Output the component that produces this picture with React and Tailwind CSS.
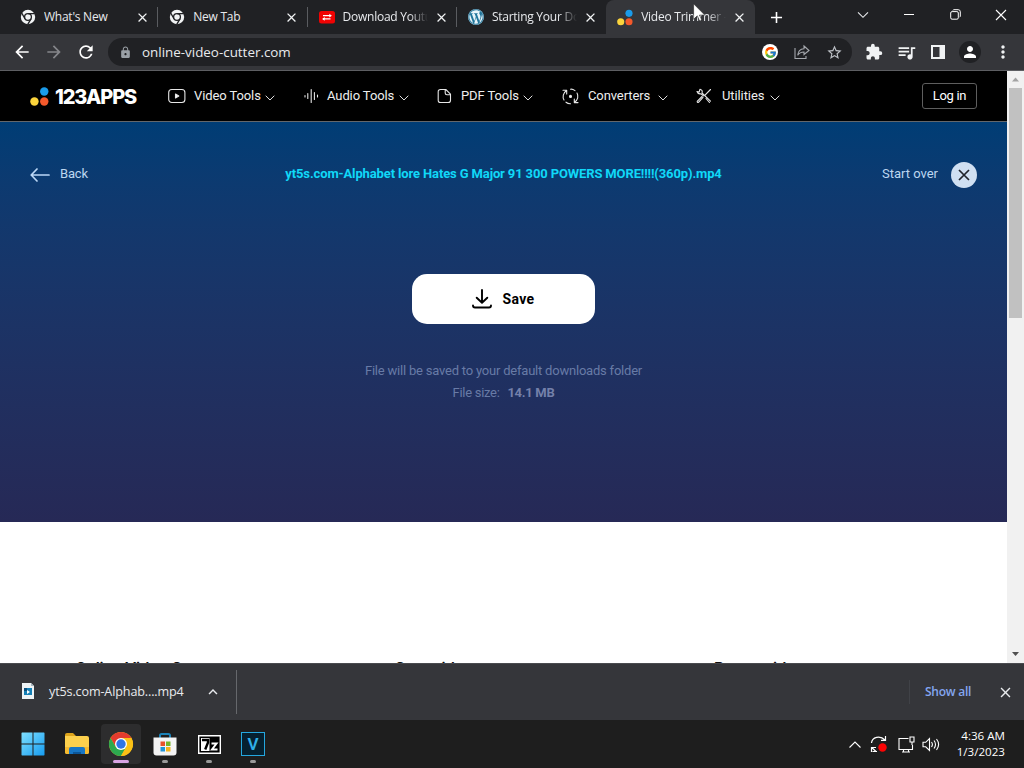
import React from 'react';
import {
  MdArrowBack,
  MdArrowForward,
  MdClose,
  MdAdd,
  MdExtension,
  MdLock,
  MdMoreVert,
  MdPerson,
  MdQueueMusic,
  MdRefresh,
  MdStarBorder,
  MdExpandLess,
} from 'react-icons/md';
import { FaWordpress } from 'react-icons/fa';
import { FcGoogle } from 'react-icons/fc';

const MonoChrome = () => (
  <svg width="16" height="16" viewBox="0 0 16 16">
    <circle cx="8" cy="8" r="7.2" fill="#f1f3f4" />
    <circle cx="8" cy="8" r="3.4" fill="none" stroke="#202124" strokeWidth="1.3" />
    <path d="M8 4.6h6.8M5 9.8 1.6 3.9M11 9.8 7.6 15.6" stroke="#202124" strokeWidth="1.3" />
  </svg>
);

const YoutubeDownload = () => (
  <svg width="16" height="16" viewBox="0 0 16 16">
    <rect x="0" y="2" width="16" height="12.5" rx="2.5" fill="#f00303" />
    <path d="M4 6.7h7M4 9.9h7.500" stroke="#fff" strokeWidth="1.2" />
    <path d="m10.300 4.800 2.600 1.900-2.600 1.900zM5.700 8l-2.600 1.900 2.600 1.900z" fill="#fff" />
  </svg>
);

const AppsDots = ({ size = 18 }) => (
  <svg width={size} height={size} viewBox="0 0 18 18">
    <circle cx="13.5" cy="4.3" r="4" fill="#1a9bea" />
    <circle cx="4.2" cy="13.8" r="4" fill="#fbd43c" />
    <circle cx="13.5" cy="13.8" r="4" fill="#f4592b" />
  </svg>
);

const tabs = [
  { title: "What's New", icon: <MonoChrome /> },
  { title: 'New Tab', icon: <MonoChrome /> },
  { title: 'Download Youtu', icon: <YoutubeDownload /> },
  { title: 'Starting Your Do', icon: <span className="rounded-full bg-[#21759b]"><FaWordpress size={16} color="#e8f4fa" /></span> },
  { title: 'Video Trimmer -', icon: <AppsDots size={17} />, active: true },
];

const Tab = ({ tab, index }) => (
  <div
    className={`flex items-center h-[34px] w-[149.3px] pl-[11px] shrink-0 ${
      tab.active ? 'bg-[#35363a] rounded-t-lg' : ''
    }`}
  >
    <span className="w-4 shrink-0 flex">{tab.icon}</span>
    <span
      className={`ml-2 w-[85px] shrink-0 overflow-hidden whitespace-nowrap text-[12px] tracking-[-0.25px] text-[#e8eaed] ${
        index > 1 ? '[mask-image:linear-gradient(to_right,#000_78%,transparent)]' : ''
      }`}
    >
      {tab.title}
    </span>
    <MdClose size={15} className="ml-[6px] shrink-0" color="#f1f3f4" />
    {index < 3 && <span className="ml-auto w-px h-5 bg-[#5a5c60]" />}
  </div>
);

const TabStrip = () => (
  <div className="flex h-[34px] pl-[9px] bg-[#202124]">
    {tabs.map((tab, i) => (
      <Tab key={tab.title} tab={tab} index={i} />
    ))}
    <div className="flex items-center pl-[12px]">
      <MdAdd size={19} color="#fff" />
    </div>
    <div className="ml-auto flex h-[29px]">
      <div className="w-[46px] flex items-center justify-center">
        <svg width="12" height="8" viewBox="0 0 12 8" fill="none" stroke="#e8eaed" strokeWidth="1.1"><path d="m1 1.3 5 5 5-5" /></svg>
      </div>
      <div className="w-[46px] flex items-center justify-center">
        <span className="w-[10px] h-px bg-[#fff]" />
      </div>
      <div className="w-[46px] flex items-center justify-center">
        <svg width="11" height="11" viewBox="0 0 11 11" fill="none" stroke="#fff"><rect x=".7" y="2.6" width="7.6" height="7.6" rx="1.4" /><path d="M2.8 1.4Q3.2.7 4 .7h4.2q2.1 0 2.1 2.1V7q0 .7-.7 1.2" /></svg>
      </div>
      <div className="w-[46px] flex items-center justify-center">
        <svg width="12" height="12" viewBox="0 0 12 12" stroke="#fff" strokeWidth="1.1"><path d="m1 1 10 10M11 1 1 11" /></svg>
      </div>
    </div>
  </div>
);

const Toolbar = () => (
  <div className="flex items-center h-[37px] bg-[#35363a] border-b border-[#5d5e62] pl-3">
    <MdArrowBack size={20} color="#fff" />
    <MdArrowForward size={20} color="#85868a" className="ml-3" />
    <MdRefresh size={20} color="#fff" className="ml-3" />
    <div className="ml-3 flex items-center h-[28px] w-[744px] rounded-full bg-[#202124] pl-[11px] pr-[9px]">
      <MdLock size={13} color="#9aa0a6" />
      <span className="ml-[10px] mt-px text-[13.4px] leading-none text-[#e8eaed]">online-video-cutter.com</span>
      <span className="ml-auto flex items-center justify-center w-4 h-4 rounded-full bg-white">
        <FcGoogle size={13} />
      </span>
      <svg className="ml-4" width="16" height="16" viewBox="0 0 16 16" fill="none" stroke="#a5a8ad" strokeWidth="1.1">
        <path d="M1 4v10.5h11V12M10 2l5 4.5-5 4V8C7 8 5 9 3.7 11.3 4 7.5 6 5 10 4.700z" />
      </svg>
      <MdStarBorder size={17} color="#bdc1c6" className="ml-4" />
    </div>
    <MdExtension size={18} color="#f1f3f4" className="ml-[13px]" />
    <MdQueueMusic size={21} color="#f1f3f4" className="ml-[13px]" />
    <svg className="ml-[14px]" width="14" height="14" viewBox="0 0 14 14"><path d="M1 1h12v12H1z" fill="none" stroke="#f1f3f4" strokeWidth="2" /><path d="M8.500 1h4.500v12H8.500z" fill="#f1f3f4" /></svg>
    <span className="ml-[14px] flex items-center justify-center w-[22px] h-[22px] rounded-full bg-[#202124]">
      <MdPerson size={18} color="#fff" />
    </span>
    <MdMoreVert size={20} color="#f1f3f4" className="ml-3" />
  </div>
);

const iconProps = { fill: 'none', stroke: '#e6e6e6', strokeWidth: 1.1, strokeLinecap: 'round', strokeLinejoin: 'round' };

const navItems = [
  {
    label: 'Video Tools',
    box: 'w-[136px]',
    gap: 'w-[26px]',
    textWidth: 'w-[66px]',
    icon: (
      <svg width="18" height="16" viewBox="0 0 18 16" {...iconProps}>
        <rect x=".7" y="1.500" width="16.2" height="13" rx="3" />
        <path d="M7.500 6v4l3.300-2z" fill="#fff" />
      </svg>
    ),
  },
  {
    label: 'Audio Tools',
    box: 'w-[133px]',
    gap: 'w-[23px]',
    textWidth: 'w-[67px]',
    icon: (
      <svg width="15" height="16" viewBox="0 0 15 16" {...iconProps}>
        <path d="M1 7.500v1.500M3.800 5.500v5M7.200 1.500v13M10.400 4.500v7M13.500 7v2" />
      </svg>
    ),
  },
  {
    label: 'PDF Tools',
    box: 'w-[125px]',
    gap: 'w-[24px]',
    textWidth: 'w-[57px]',
    icon: (
      <svg width="15" height="16" viewBox="0 0 15 16" {...iconProps}>
        <path d="M3.500 1.500h5.300l4.700 4.700v6q0 2.300-2.300 2.300H3.500q-2.300 0-2.300-2.300V3.800q0-2.300 2.300-2.300zM8.200 1.500v3.600q0 1.700 1.700 1.700h3.600" />
      </svg>
    ),
  },
  {
    label: 'Converters',
    box: 'w-[134px]',
    gap: 'w-[26px]',
    textWidth: 'w-[65px]',
    icon: (
      <svg width="17" height="17" viewBox="0 0 17 17" {...iconProps}>
        <path d="M1 2.200h3.700V6M4.500 2.500C1 5 .3 9 2 12M4 14.200c1.500 1.200 3 1.600 4.500 1.500M16 14.600h-3.700V11M12.500 14.300C16 12 16.700 8 15 5M13 2.600C11.500 1.500 9.500 1 8.500 1.200" />
        <circle cx="8.500" cy="8.400" r="1" fill="#fff" />
      </svg>
    ),
  },
  {
    label: 'Utilities',
    box: 'w-[90px]',
    gap: 'w-[26px]',
    textWidth: 'w-[43px]',
    icon: (
      <svg width="16" height="16" viewBox="0 0 16 16" {...iconProps}>
        <path d="M14.500 1.500 9 7.200M7 9.300l-4.500 5q-1 .5-1.300-.5 0-.6.500-1L6 8.500M1 3.500l2.200.5L4 1.200Q7 2 6 5l8.500 8.200M10 10.500l3.500 4M1 3.500q1 3 4 2.300l2.300 2" />
      </svg>
    ),
  },
];

const SiteHeader = () => (
  <header className="flex items-center h-[51px] bg-black border-b border-[#63676b] pl-[30px] pr-[30px] font-[Roboto,sans-serif]">
    <AppsDots size={19} />
    <span className="ml-[6px] mt-px w-[82px] whitespace-nowrap font-[Inter,sans-serif] text-[20px] leading-none font-extrabold tracking-[-1.2px] text-white">123APPS</span>
    <nav className="ml-[31px] flex items-center">
      {navItems.map((item) => (
        <div key={item.label} className={`flex items-center shrink-0 ${item.box}`}>
          <span className={`shrink-0 ${item.gap}`}>{item.icon}</span>
          <span className={`shrink-0 whitespace-nowrap text-[13px] tracking-[-0.1px] text-[#eeeeee] ${item.textWidth}`}>{item.label}</span>
          <svg className="ml-[5px] mt-[3px]" width="10" height="6" viewBox="0 0 10 6" fill="none" stroke="#ddd"><path d="m.7.700 4.300 4.300L9.300.700" /></svg>
        </div>
      ))}
    </nav>
    <button className="ml-auto w-[55px] h-[26px] rounded-[3px] border border-[#5e5e5e] text-[13px] tracking-[-0.3px] text-white">Log in</button>
  </header>
);

const Hero = () => (
  <section className="h-[400px] bg-linear-to-b from-[#003d75] to-[#262956] px-[30px] font-[Roboto,sans-serif] text-[13px]">
    <div className="flex items-center justify-between h-[106px] text-[#bcd6f0]">
      <div className="flex items-center w-[200px]">
        <svg width="20" height="14" viewBox="0 0 20 14" fill="none" stroke="#bcd8f7" strokeWidth="1.7" strokeLinecap="round" strokeLinejoin="round"><path d="M19 7H1.300M7 1 1.200 7 7 13" /></svg>
        <span className="ml-[10px] -mt-[2px] text-[13px] tracking-[-0.2px]">Back</span>
      </div>
      <h1 className="-mt-[2px] whitespace-nowrap text-[13px] tracking-[-0.13px] font-bold text-[#10d8f8]">
        yt5s.com-Alphabet lore Hates G Major 91 300 POWERS MORE!!!!(360p).mp4
      </h1>
      <div className="flex items-center justify-end w-[200px]">
        <span className="-mt-[2px]">Start over</span>
        <span className="ml-[13px] flex items-center justify-center w-[26px] h-[26px] rounded-full bg-[#d0e0f2]">
          <svg width="12" height="12" viewBox="0 0 12 12" stroke="#20242c" strokeWidth="1.7"><path d="m1 1 10 10M11 1 1 11" /></svg>
        </span>
      </div>
    </div>
    <div className="flex flex-col items-center pt-[46px]">
      <button className="flex items-center justify-center gap-[10px] w-[183px] h-[50px] rounded-[15px] bg-white text-black">
        <svg width="20" height="20" viewBox="0 0 20 20" fill="none" stroke="#000" strokeWidth="1.900" strokeLinecap="round" strokeLinejoin="round">
          <path d="M10 1v12.500M4.700 8.700l5.300 5 5.300-5M1 16.500q0 2 2 2h14q2 0 2-2" />
        </svg>
        <span className="text-[14px] tracking-[0.4px] font-bold">Save</span>
      </button>
      <p className="mt-[36px] leading-[22px] tracking-[-0.21px] text-[#687ba6]">File will be saved to your default downloads folder</p>
      <p className="leading-[22px] tracking-[-0.3px] text-[#687ba6]">
        File size: <b className="ml-[5px] text-[#7480aa]">14.1 MB</b>
      </p>
    </div>
  </section>
);

const Features = () => (
  <section className="flex h-[141px] overflow-hidden bg-white pl-[75px] pt-[135px] font-[Inter,sans-serif] text-[15.500px] leading-[24px] font-semibold tracking-[-0.3px] text-[#111]">
    <h2 className="w-[319px] shrink-0">Online Video Cutter</h2>
    <h2 className="w-[320px] shrink-0">Crop video</h2>
    <h2>Rotate video</h2>
  </section>
);

const Scrollbar = () => (
  <div className="flex flex-col items-center w-[17px] bg-[#f1f1f1]">
    <svg className="mt-[6px] shrink-0" width="7" height="5" viewBox="0 0 7 5"><path d="M0 4.500h7L3.500.5z" fill="#a3a3a3" /></svg>
    <div className="mt-[6px] w-[13px] h-[230px] bg-[#c1c1c1]" />
    <svg className="mt-auto mb-[7px] shrink-0" width="7" height="4" viewBox="0 0 7 4"><path d="M0 0h7L3.500 4z" fill="#505050" /></svg>
  </div>
);

const DownloadBar = () => (
  <div className="flex items-center h-[57px] bg-[#35363a] border-t border-[#4a4b4f] text-[#e8eaed]">
    <svg className="ml-[22px] -mt-[2px]" width="12" height="16" viewBox="0 0 12 16">
      <path d="M0 0h9l3 3v13H0z" fill="#eef3f5" />
      <path d="M9 0v3h3" fill="#a9b6bd" />
      <path d="M2 5h8v7H2z" fill="#1680b5" />
      <path d="M2 5h3v3H2z" fill="#0c4f7c" />
      <path d="M5 7v4l3-2z" fill="#fff" />
    </svg>
    <span className="ml-[15px] mt-px w-[137px] whitespace-nowrap text-[12.6px] tracking-[-0.14px]">yt5s.com-Alphab....mp4</span>
    <MdExpandLess size={18} className="ml-[18px]" />
    <span className="ml-[14px] w-px h-[44px] bg-[#66686c]" />
    <span className="ml-auto w-px h-6 bg-[#404247]" />
    <span className="ml-[15px] w-[46px] whitespace-nowrap text-[12px] tracking-[-0.25px] font-semibold text-[#84a6f0]">Show all</span>
    <MdClose size={17} className="ml-[26px] mr-[10px]" />
  </div>
);

const WindowsLogo = () => (
  <svg width="24" height="24" viewBox="0 0 24 24">
    <defs>
      <linearGradient id="win" x1="0" y1="0" x2="1" y2="1">
        <stop offset="0" stopColor="#7fe0ff" />
        <stop offset="1" stopColor="#169cf0" />
      </linearGradient>
    </defs>
    <path d="M1 .5h10.500v11H.5V1zM12.500.5H23l.5.500v10.500h-11zM.5 12.500h11v11H1l-.5-.5zM12.500 12.500h11V23l-.5.500H12.500z" fill="url(#win)" />
  </svg>
);

const FolderIcon = () => (
  <svg width="26" height="24" viewBox="0 0 26 24">
    <path d="M1 3q0-2 2-2h6l3 3H1z" fill="#dda41c" />
    <path d="M1 4h22q2 0 2 2v14q0 2-2 2H3q-2 0-2-2z" fill="#fcd04d" />
    <path d="M1 15h24v5q0 2-2 2H3q-2 0-2-2z" fill="#f5b92e" />
    <path d="M5 22v-5q0-2 2-2h12q2 0 2 2v5z" fill="#1776c5" />
    <path d="M9 22v-2h8v2z" fill="#0c5698" />
  </svg>
);

const ChromeIcon = () => (
  <svg width="26" height="26" viewBox="0 0 26 26">
    <circle cx="13" cy="13" r="12" fill="#fbc116" />
    <path d="M2.600 7A12 12 0 0 1 23.400 7H13l-5.200 9z" fill="#e33b2e" />
    <path d="M2.600 7A12 12 0 0 0 13 25l5.200-9H7.800z" fill="#2da94f" />
    <path d="M13 7h10.400A12 12 0 0 1 13 25l5.200-9z" fill="#fbc116" />
    <circle cx="13" cy="13" r="6" fill="#fff" />
    <circle cx="13" cy="13" r="4.700" fill="#2f75e8" />
  </svg>
);

const StoreIcon = () => (
  <svg width="24" height="25" viewBox="0 0 24 25">
    <path d="M7 6V3.500Q7 2 8.500 2h7Q17 2 17 3.500V6" fill="none" stroke="#1c83b8" strokeWidth="2" />
    <path d="M.5 5.500h23v15q0 3-3 3h-17q-3 0-3-3z" fill="#f4f4f4" />
    <path d="M7.500 9.500H12V14H7.500z" fill="#e8532b" />
    <path d="M13 9.500h4.500V14H13z" fill="#75b62b" />
    <path d="M7.500 15H12v4.500H7.500z" fill="#2295d8" />
    <path d="M13 15h4.500v4.500H13z" fill="#f5b51b" />
  </svg>
);

const SevenZipIcon = () => (
  <svg width="23" height="19" viewBox="0 0 23 19">
    <path d="M.7.700h21.600v17.600H.7z" fill="#000" stroke="#fff" strokeWidth="1.400" />
    <path d="M3 3h8.500v13H3z" fill="#fff" />
    <path d="M4 5h6v2.500L7.200 14.500" fill="none" stroke="#000" strokeWidth="2.400" />
    <path d="M13.500 8.500h5L14 14.500h5.500" fill="none" stroke="#fff" strokeWidth="2" />
  </svg>
);

const VegasIcon = () => (
  <span className="flex items-center justify-center w-6 h-6 border-[1.500px] border-[#24a7df] bg-[#06202f] font-[Roboto,sans-serif] text-[17px] leading-none font-semibold text-[#2fafe8]">
    V
  </span>
);

const apps = [
  { name: 'start', icon: <WindowsLogo /> },
  { name: 'explorer', icon: <FolderIcon /> },
  { name: 'chrome', icon: <ChromeIcon />, active: true },
  { name: 'store', icon: <StoreIcon />, open: true },
  { name: '7zip', icon: <SevenZipIcon />, open: true },
  { name: 'vegas', icon: <VegasIcon />, open: true },
];

const Taskbar = () => (
  <div className="flex items-center h-12 bg-[#1e1e1e] pl-[13px] text-white">
    <div className="flex gap-1">
      {apps.map((app) => (
        <div
          key={app.name}
          className={`flex flex-col items-center w-10 h-10 rounded ${app.active ? 'bg-[#2d2d2e]' : ''}`}
        >
          <span className="flex items-center justify-center h-[36px] mt-[2px] shrink-0">{app.icon}</span>
          {app.active && <span className="-mt-[2px] w-4 h-[3px] shrink-0 rounded-full bg-[#d9a3e3]" />}
          {app.open && <span className="-mt-[2px] w-[6px] h-[3px] shrink-0 rounded-full bg-[#9a9a9a]" />}
        </div>
      ))}
    </div>
    <div className="ml-auto flex items-center">
      <svg width="12" height="7" viewBox="0 0 12 7" fill="none" stroke="#fff" strokeWidth="1.100"><path d="m.500 6.500 5.500-5.500 5.500 5.500" /></svg>
      <svg className="ml-[9px]" width="18" height="18" viewBox="0 0 18 18" fill="none" stroke="#fff" strokeWidth="1.200">
        <path d="M1.500 8C2 2 10 0 15 5M15.500 1v4.300h-4.500M7 16.500H2.500M1.500 17v-4.500h4.500M2 12.700l4 3.800" />
        <circle cx="12.500" cy="12.500" r="4.200" fill="#fb0404" stroke="none" />
      </svg>
      <svg className="ml-[10px]" width="17" height="17" viewBox="0 0 17 17" fill="none" stroke="#fff" strokeWidth="1.100">
        <path d="M10.500 2.500H1v11h13.500V9M4 16h8M5.500 13.500V16M10.500 13.500V16M12 1h4v5h-4zM14 6v3" />
      </svg>
      <svg className="ml-[7px]" width="18" height="15" viewBox="0 0 18 15" fill="none" stroke="#fff" strokeWidth="1.100">
        <path d="M1 5.300h2.700L7.500 1.500v12L3.700 9.800H1zM9.500 5q1.800 2.500 0 5M12 3.500q3 4 0 8M14.500 2q4.200 5.500 0 11" />
      </svg>
      <div className="ml-[13px] mr-[19px] w-[52px] text-[11.600px] leading-[16px] whitespace-nowrap flex flex-col items-end">
        <span>4:36 AM</span>
        <span>1/3/2023</span>
      </div>
    </div>
  </div>
);

export default function App() {
  return (
    <div className="relative flex flex-col w-[1024px] h-[768px] overflow-hidden font-['Open_Sans','Noto_Sans',sans-serif]">
      <TabStrip />
      <Toolbar />
      <main className="flex h-[592px]">
        <div className="w-[1007px]">
          <SiteHeader />
          <Hero />
          <Features />
        </div>
        <Scrollbar />
      </main>
      <DownloadBar />
      <Taskbar />
      {/* mouse pointer hovering the active tab */}
      <svg className="absolute left-[693px] top-[3px]" width="13" height="19" viewBox="0 0 13 19">
        <path d="M.6.8v15.500l3.700-3.500 2.200 5 2.200-1-2.200-4.700h5.300z" fill="#fff" stroke="#222" strokeWidth=".6" />
      </svg>
    </div>
  );
}
